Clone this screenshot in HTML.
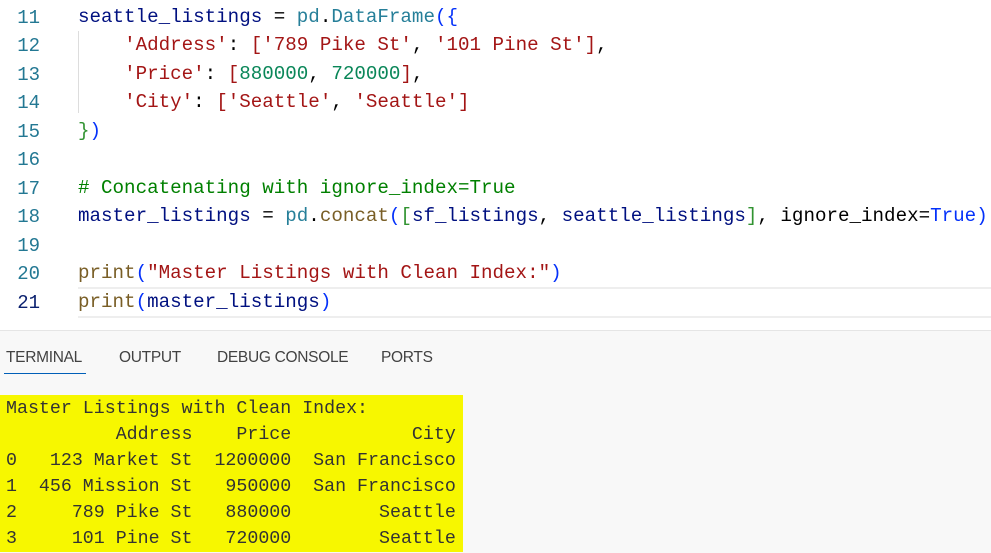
<!DOCTYPE html>
<html><head><style>
body{margin:0;width:991px;height:552px;overflow:hidden;background:#fff;position:relative;font-family:"Liberation Mono",monospace}
.ln{position:absolute;left:0;width:40px;text-align:right;color:#237893;font-size:19px}
.cl{position:absolute;left:78px;font-size:19.2px;white-space:pre;color:#001080}
.s{color:#a31515}.n{color:#098658}.c{color:#008000}.f{color:#795e26}.t{color:#267f99}.b{color:#0431fa}.g{color:#319331}.k{color:#000}
#panel{position:absolute;left:0;top:330px;width:991px;height:222px;background:#f8f8f8;border-top:1px solid #e5e5e5}
.tab{position:absolute;top:18px;font-family:"Liberation Sans",sans-serif;font-size:15.5px;color:#424242;letter-spacing:-0.3px}
#term{position:absolute;left:0;top:395px;width:463px;height:157px;background:#f7f700}
.tl{position:absolute;left:6px;font-size:18.3px;white-space:pre;color:#333}
</style></head><body>
<div class="ln" style="top:7px">11</div>
<div class="ln" style="top:35px">12</div>
<div class="ln" style="top:64px">13</div>
<div class="ln" style="top:92px">14</div>
<div class="ln" style="top:121px">15</div>
<div class="ln" style="top:149px">16</div>
<div class="ln" style="top:178px">17</div>
<div class="ln" style="top:206px">18</div>
<div class="ln" style="top:235px">19</div>
<div class="ln" style="top:263px">20</div>
<div class="ln" style="top:292px;color:#0b216f">21</div>
<div style="position:absolute;left:78px;top:31px;width:1px;height:82px;background:#ddd"></div>
<div style="position:absolute;left:78px;top:287px;width:913px;height:27px;border:2px solid #eee;border-left:none;border-right:none"></div>
<div class="cl" style="top:6px">seattle_listings <span class="k">=</span> <span class="t">pd</span><span class="k">.</span><span class="t">DataFrame</span><span class="b">({</span></div>
<div class="cl" style="top:34px">    <span class="s">'Address'</span><span class="k">:</span> <span class="s">['789 Pike St'</span><span class="k">,</span> <span class="s">'101 Pine St'</span><span class="s">]</span><span class="k">,</span></div>
<div class="cl" style="top:63px">    <span class="s">'Price'</span><span class="k">:</span> <span class="s">[</span><span class="n">880000</span><span class="k">,</span> <span class="n">720000</span><span class="s">]</span><span class="k">,</span></div>
<div class="cl" style="top:91px">    <span class="s">'City'</span><span class="k">:</span> <span class="s">['Seattle'</span><span class="k">,</span> <span class="s">'Seattle']</span></div>
<div class="cl" style="top:120px"><span class="g">}</span><span class="b">)</span></div>
<div class="cl c" style="top:177px"># Concatenating with ignore_index=True</div>
<div class="cl" style="top:205px">master_listings <span class="k">=</span> <span class="t">pd</span><span class="k">.</span><span class="f">concat</span><span class="b">(</span><span class="g">[</span>sf_listings<span class="k">,</span> seattle_listings<span class="g">]</span><span class="k">,</span> <span class="k">ignore_index</span><span class="k">=</span><span class="b">True</span><span class="b">)</span></div>
<div class="cl" style="top:262px"><span class="f">print</span><span class="b">(</span><span class="s">"Master Listings with Clean Index:"</span><span class="b">)</span></div>
<div class="cl" style="top:291px"><span class="f">print</span><span class="b">(</span>master_listings<span class="b">)</span></div>
<div id="panel">
<div class="tab" style="left:6px">TERMINAL</div>
<div style="position:absolute;left:4px;top:42px;width:82px;height:1px;background:#005fb8"></div>
<div class="tab" style="left:119px">OUTPUT</div>
<div class="tab" style="left:217px">DEBUG CONSOLE</div>
<div class="tab" style="left:381px">PORTS</div>
</div>
<div id="term">
<div class="tl" style="top:4px">Master Listings with Clean Index:</div>
<div class="tl" style="top:30px">          Address    Price           City</div>
<div class="tl" style="top:56px">0   123 Market St  1200000  San Francisco</div>
<div class="tl" style="top:82px">1  456 Mission St   950000  San Francisco</div>
<div class="tl" style="top:108px">2     789 Pike St   880000        Seattle</div>
<div class="tl" style="top:134px">3     101 Pine St   720000        Seattle</div>
</div>
</body></html>
